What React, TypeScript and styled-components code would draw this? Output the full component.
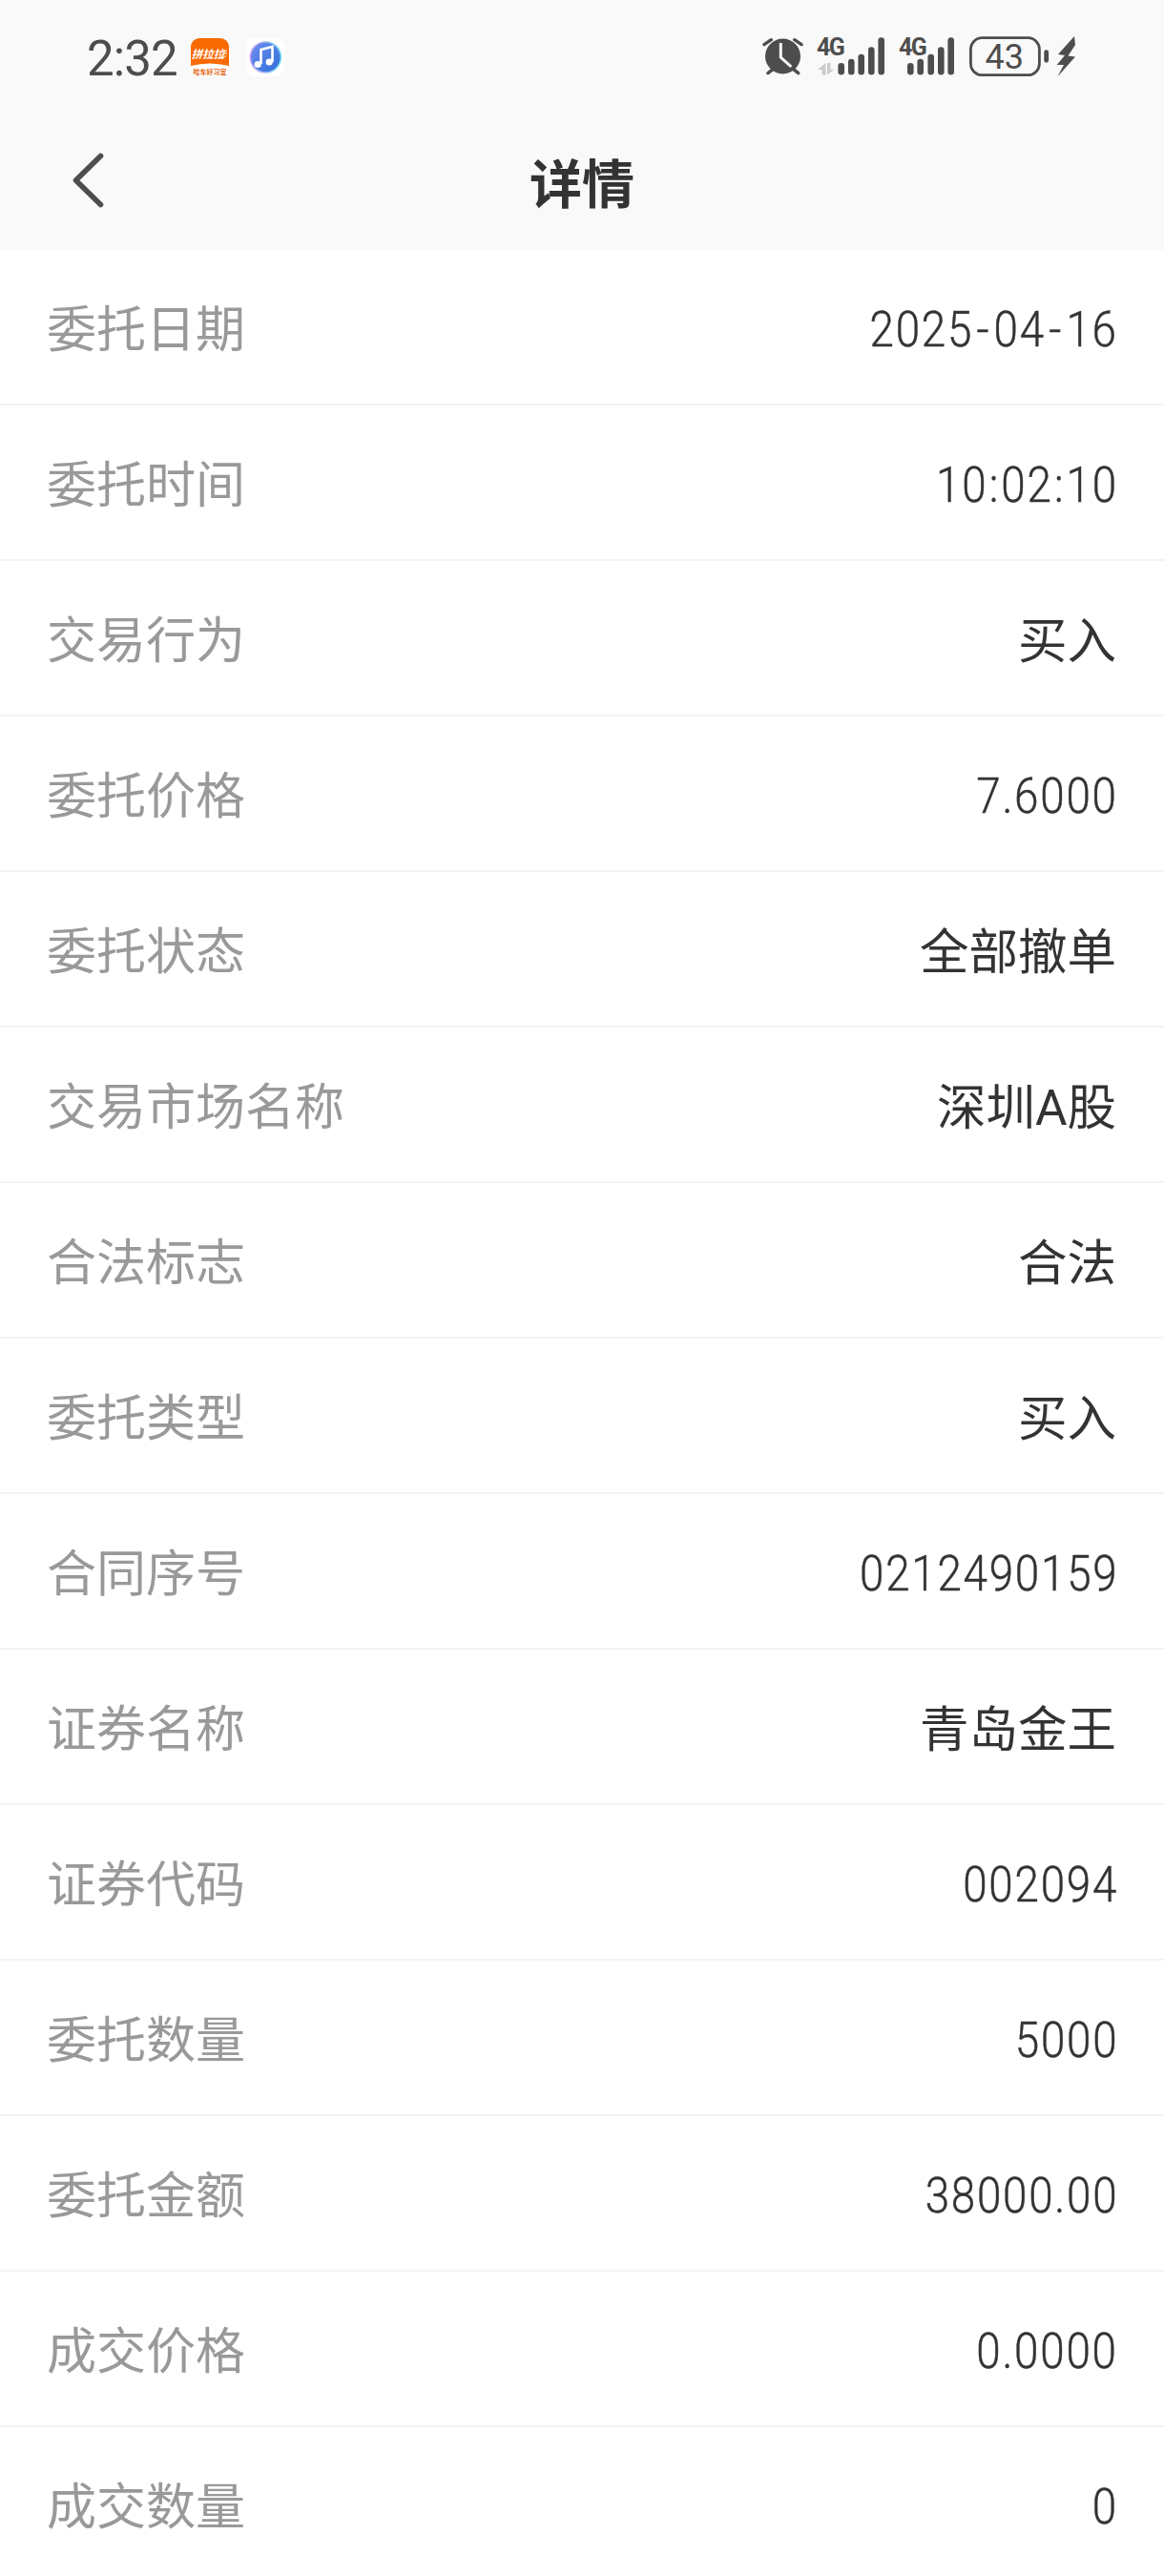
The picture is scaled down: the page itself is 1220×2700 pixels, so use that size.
import type { ReactNode } from 'react';
import styled, { createGlobalStyle } from 'styled-components';

const GlobalStyle = createGlobalStyle`
    html, body {
        margin: 0;
        padding: 0;
        background: #fff;
    }
    * { box-sizing: border-box; }
`;

const Page = styled.div`
    width: 1220px;
    height: 2700px;
    overflow: hidden;
    background: #fff;
    font-family: Roboto, "Noto Sans CJK SC", sans-serif;
`;

const Header = styled.header`
    height: 262px;
    background: #f9f9f9;
`;

const StatusBar = styled.div`
    height: 120px;
    padding: 0 92px 0 91px;
    display: flex;
    align-items: center;
    justify-content: space-between;
`;

const StatusLeft = styled.div`
    display: flex;
    align-items: center;
`;

const Clock = styled.span`
    font-size: 51px;
    line-height: 1;
    letter-spacing: -0.9px;
    color: #4d4d4d;
    margin-right: 14px;
    padding-top: 3px;
`;

const AppBadge = styled.svg`
    display: block;
    width: 40px;
    height: 40px;
    margin-right: 18px;
`;

const StatusRight = styled.div`
    display: flex;
    align-items: center;
`;

const StatusIcon = styled.svg<{ $gap?: number }>`
    display: block;
    height: 48px;
    margin-left: ${(p) => p.$gap ?? 0}px;
    fill: #4d4d4d;
`;

const NavBar = styled.nav`
    position: relative;
    height: 142px;
    padding-top: 6px;
    display: flex;
    align-items: center;
    justify-content: center;
`;

const BackButton = styled.svg`
    position: absolute;
    left: 72px;
    top: 35px;
    width: 42px;
    height: 64px;
`;

const Title = styled.h1`
    margin: 0;
    font-size: 55px;
    font-weight: 700;
    color: #333;
    line-height: 1;
`;

const Row = styled.div`
    height: 163px;
    padding: 0 50px 0 49px;
    display: flex;
    align-items: center;
    justify-content: space-between;
    border-bottom: 2px solid #f3f3f3;
`;

const Label = styled.span`
    font-size: 52px;
    color: #999;
    padding-bottom: 3px;
`;

const Value = styled.span<{ $numeric?: boolean }>`
    display: inline-block;
    font-size: ${(p) => (p.$numeric ? 52 : 51.5)}px;
    color: #333;
    padding-bottom: ${(p) => (p.$numeric ? 0 : 3)}px;
    padding-top: ${(p) => (p.$numeric ? 6 : 0)}px;
    margin-right: ${(p) => (p.$numeric ? -2 : 0)}px;
    font-weight: ${(p) => (p.$numeric ? 300 : 400)};
    letter-spacing: ${(p) => (p.$numeric ? 2 : 0)}px;
    -webkit-text-stroke: ${(p) => (p.$numeric ? 0.45 : 0)}px #333;
    transform: ${(p) => (p.$numeric ? 'scaleX(0.88)' : 'none')};
    transform-origin: right center;
`;

const Dash = styled.span`
    margin: 0 3.8px;
`;

const Colon = styled.span`
    margin: 0 1.5px;
`;

const rows: { label: string; value: ReactNode; numeric?: boolean }[] = [
    { label: '委托日期', value: <>2025<Dash>-</Dash>04<Dash>-</Dash>16</>, numeric: true },
    { label: '委托时间', value: <>10<Colon>:</Colon>02<Colon>:</Colon>10</>, numeric: true },
    { label: '交易行为', value: '买入' },
    { label: '委托价格', value: '7.6000', numeric: true },
    { label: '委托状态', value: '全部撤单' },
    { label: '交易市场名称', value: '深圳A股' },
    { label: '合法标志', value: '合法' },
    { label: '委托类型', value: '买入' },
    { label: '合同序号', value: '0212490159', numeric: true },
    { label: '证券名称', value: '青岛金王' },
    { label: '证券代码', value: '002094', numeric: true },
    { label: '委托数量', value: '5000', numeric: true },
    { label: '委托金额', value: '38000.00', numeric: true },
    { label: '成交价格', value: '0.0000', numeric: true },
    { label: '成交数量', value: '0', numeric: true },
];

const barTops = [66, 61.7, 56.7, 49.3, 39.3];

const SignalBars = ({ centers }: { centers: number[] }) => (
    <>
        {centers.map((cx, i) => (
            <rect key={cx} x={cx - 3.3} y={barTops[i]} width="6.6" height={78.5 - barTops[i]} rx="3.3" />
        ))}
    </>
);

const NetworkLabel = ({ x }: { x: number }) => (
    <text x={x} y="58.3" fontSize="25" fontWeight="700" letterSpacing="-1.6" fontFamily="Roboto">4G</text>
);

const App = () => (
    <Page>
        <GlobalStyle />
        <Header>
            <StatusBar>
                <StatusLeft>
                    <Clock>2:32</Clock>
                    <AppBadge viewBox="0 0 40 40">
                        <rect width="40" height="40" rx="9" fill="#fff" />
                        <path d="M0 9a9 9 0 0 1 9-9h22a9 9 0 0 1 9 9v20q-20 -5 -40 0z" fill="#f96a02" />
                        <text x="18" y="21" textAnchor="middle" fontSize="11.5" fontWeight="700" fontStyle="italic" fill="#fff" fontFamily="Noto Sans CJK SC">拼拉拉</text>
                        <path d="M35 13h3M34 16h4M33 19h4" stroke="#fff" strokeWidth="1" />
                        <text x="20" y="38" textAnchor="middle" fontSize="7" fontWeight="700" fill="#e2620a" fontFamily="Noto Sans CJK SC">哈车好习宜</text>
                    </AppBadge>
                    <AppBadge viewBox="0 0 40 40">
                        <defs>
                            <linearGradient id="note" x1="0" y1="0" x2="1" y2="1">
                                <stop offset="0" stopColor="#6f8df0" />
                                <stop offset="1" stopColor="#2f6fd8" />
                            </linearGradient>
                            <linearGradient id="ring" x1="0" y1="0" x2="1" y2="0">
                                <stop offset="0" stopColor="#cda8f0" />
                                <stop offset="1" stopColor="#6fd6f5" />
                            </linearGradient>
                        </defs>
                        <rect width="40" height="40" rx="9" fill="#fff" />
                        <circle cx="20.3" cy="20" r="16" fill="url(#note)" stroke="url(#ring)" strokeWidth="1.6" />
                        <path d="M15.5 27V12l12-3v16" fill="none" stroke="#fff" strokeWidth="2.6" />
                        <circle cx="12.2" cy="27.5" r="3.6" fill="#fff" />
                        <circle cx="24.2" cy="25" r="3.6" fill="#fff" />
                    </AppBadge>
                </StatusLeft>
                <StatusRight>
                    <StatusIcon width="44" viewBox="798 36 44 48">
                        <circle cx="820.5" cy="59" r="18.5" />
                        <path d="M818.3 45v15l11 10" fill="none" stroke="#f9f9f9" strokeWidth="3" />
                        <path d="M801 46.7l7.3-5M840 46.7l-7.3-5M805 76.7l5-4M836.7 76.7l-5-4" fill="none" stroke="#4d4d4d" strokeWidth="3.4" strokeLinecap="round" />
                    </StatusIcon>
                    <StatusIcon $gap={13} width="74" viewBox="855 36 74 48">
                        <NetworkLabel x={856} />
                        <path d="M865.5 66v12.5h-4V73h-4.5z" fill="#cbcbcb" />
                        <path d="M867 78.5V66h3.5v7h3.5z" fill="#cbcbcb" />
                        <SignalBars centers={[881.7, 892.3, 902.7, 913.3, 923.7]} />
                    </StatusIcon>
                    <StatusIcon $gap={12} width="61" viewBox="941 36 61 48">
                        <NetworkLabel x={942} />
                        <SignalBars centers={[954.3, 964.7, 975.7, 986.3, 996.7]} />
                    </StatusIcon>
                    <StatusIcon $gap={12} width="87" viewBox="1014 36 87 48">
                        <rect x="1017.4" y="39.7" width="72" height="39" rx="12" fill="none" stroke="#4d4d4d" strokeWidth="2.8" />
                        <text x="1052.7" y="71.7" textAnchor="middle" fontSize="36" fontFamily="Roboto">43</text>
                        <rect x="1094.3" y="52.3" width="4.8" height="13.4" rx="2.4" />
                    </StatusIcon>
                    <StatusIcon $gap={5} width="22" viewBox="1106 36 22 48">
                        <path d="M1126 38L1109 57l7 1-8.3 10h7.3l-6.7 12.5L1127 59.5l-7.5-1L1127 47z" />
                    </StatusIcon>
                </StatusRight>
            </StatusBar>
            <NavBar>
                <BackButton viewBox="0 0 42 64">
                    <path d="M33.5 8.5L7.5 34l26 25.5" fill="none" stroke="#4d4d4d" strokeWidth="5.6" strokeLinecap="round" strokeLinejoin="round" />
                </BackButton>
                <Title>详情</Title>
            </NavBar>
        </Header>
        {rows.map(({ label, value, numeric }) => (
            <Row key={label}>
                <Label>{label}</Label>
                <Value $numeric={numeric}>{value}</Value>
            </Row>
        ))}
    </Page>
);

export default App;
